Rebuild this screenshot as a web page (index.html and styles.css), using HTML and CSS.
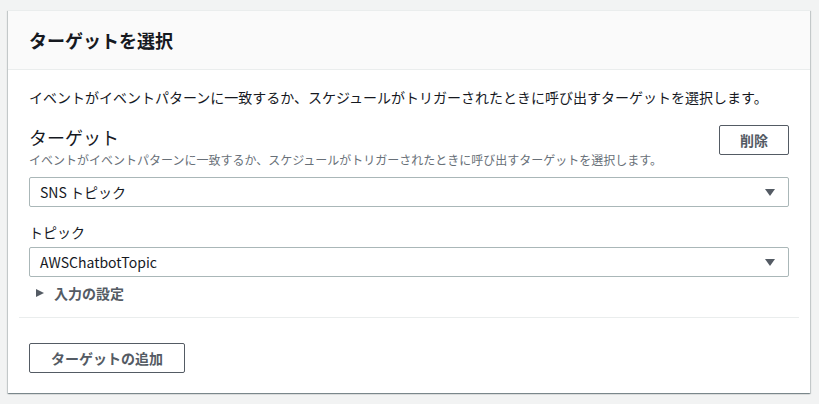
FILE: index.html
```html
<!DOCTYPE html>
<html lang="ja">
<head>
<meta charset="utf-8">
<link rel="stylesheet" href="styles.css">
</head>
<body>
<div class="card">
  <div class="card-header">ターゲットを選択</div>
  <div class="card-body">
    <p class="intro">イベントがイベントパターンに一致するか、スケジュールがトリガーされたときに呼び出すターゲットを選択します。</p>
    <div class="target-row">
      <div class="target-head">
        <div class="target-label">ターゲット</div>
        <div class="target-desc">イベントがイベントパターンに一致するか、スケジュールがトリガーされたときに呼び出すターゲットを選択します。</div>
      </div>
      <button class="btn btn-remove">削除</button>
    </div>
    <div class="select">
      <span>SNS トピック</span>
      <svg class="caret" width="10" height="7" viewBox="0 0 10 7"><polygon points="0,0 10,0 5,7" fill="#545b64"/></svg>
    </div>
    <div class="field-label">トピック</div>
    <div class="select select-topic">
      <span>AWSChatbotTopic</span>
      <svg class="caret" width="10" height="7" viewBox="0 0 10 7"><polygon points="0,0 10,0 5,7" fill="#545b64"/></svg>
    </div>
    <div class="expander">
      <svg class="expand-icon" width="8" height="8" viewBox="0 0 8 8"><polygon points="0,0 8,4 0,8" fill="#545b64"/></svg>
      <span>入力の設定</span>
    </div>
    <div class="divider"></div>
    <button class="btn btn-add">ターゲットの追加</button>
  </div>
</div>
</body>
</html>
```

FILE: styles.css
```css
html, body {
  margin: 0;
  padding: 0;
}
body {
  background: #f2f3f3;
  font-family: "Noto Sans CJK JP", "Noto Sans", sans-serif;
  color: #16191f;
  padding: 10px 9px 10px 8px;
}
.card {
  background: #ffffff;
  border-top: 1px solid #eaeded;
  box-shadow: 0 1px 1px 0 rgba(0, 28, 36, 0.3), 1px 1px 1px 0 rgba(0, 28, 36, 0.15), -1px 1px 1px 0 rgba(0, 28, 36, 0.15);
  width: 802px;
}
.card-header {
  background: #fafafa;
  height: 58px;
  border-bottom: 1px solid #eaeded;
  display: flex;
  align-items: center;
  padding: 0 21px;
  font-size: 18px;
  font-weight: bold;
  line-height: 24px;
}
.card-body {
  padding: 17px 21px 20px 21px;
}
.intro {
  margin: 0;
  font-size: 14px;
  line-height: 20px;
}
.target-row {
  display: flex;
  justify-content: space-between;
  align-items: flex-start;
  margin-top: 18px;
}
.target-label {
  font-size: 18px;
  line-height: 24px;
}
.target-desc {
  margin-top: 3px;
  font-size: 12px;
  line-height: 16px;
  color: #687078;
}
.btn {
  font-family: inherit;
  background: #ffffff;
  border: 1px solid #545b64;
  border-radius: 2px;
  color: #545b64;
  font-size: 14px;
  font-weight: bold;
  height: 30px;
  padding: 0;
  cursor: pointer;
}
.btn-remove {
  width: 70px;
}
.btn-add {
  width: 156px;
  margin-top: 25px;
  display: block;
}
.select {
  margin-top: 9px;
  height: 30px;
  box-sizing: border-box;
  border: 1px solid #aab7b8;
  border-radius: 2px;
  display: flex;
  align-items: center;
  justify-content: space-between;
  padding: 0 13px 0 10px;
  font-size: 14px;
}
.select-topic {
  margin-top: 5px;
}
.field-label {
  margin-top: 15px;
  font-size: 14px;
  line-height: 20px;
}
.expander {
  margin-top: 6px;
  display: flex;
  align-items: center;
  height: 20px;
  padding-left: 7px;
  font-size: 14px;
  font-weight: bold;
  color: #545b64;
}
.expand-icon {
  margin-right: 10px;
}
.divider {
  margin: 14px -10px 0 -10px;
  border-top: 1px solid #eaeded;
}
```
